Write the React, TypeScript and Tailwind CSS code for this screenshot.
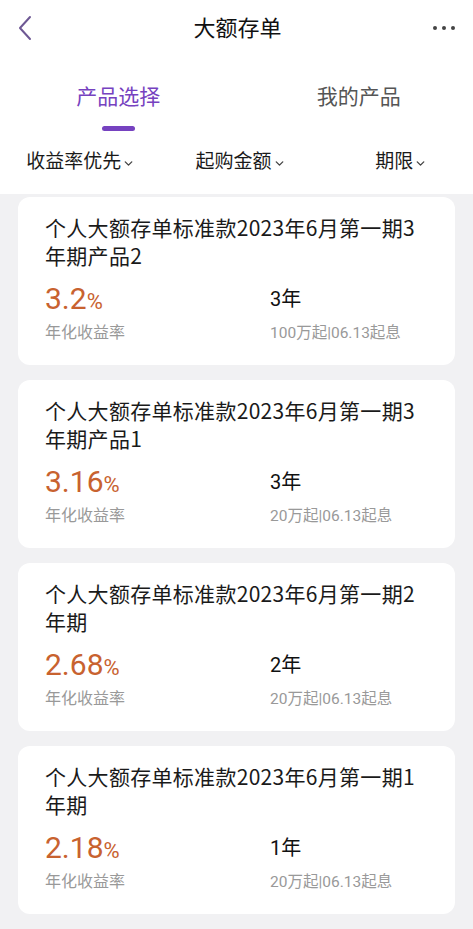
import { ChevronDown } from "lucide-react";

const products = [
  { name: "个人大额存单标准款2023年6月第一期3年期产品2", rate: "3.2", term: "3年", note: "100万起|06.13起息" },
  { name: "个人大额存单标准款2023年6月第一期3年期产品1", rate: "3.16", term: "3年", note: "20万起|06.13起息" },
  { name: "个人大额存单标准款2023年6月第一期2年期", rate: "2.68", term: "2年", note: "20万起|06.13起息" },
  { name: "个人大额存单标准款2023年6月第一期1年期", rate: "2.18", term: "1年", note: "20万起|06.13起息" },
];

function Filter({ label, className }: { label: string; className?: string }) {
  return (
    <div className={"flex items-center justify-center " + (className ?? "")}>
      <span className="text-[19px] leading-[26px] text-[#1a1a1a]">{label}</span>
      <ChevronDown className="w-[13px] h-[13px] text-[#444] mt-[3px] ml-[1px]" strokeWidth={2.5} />
    </div>
  );
}

export default function App() {
  return (
    <div
      className="w-[473px] h-[929px] overflow-hidden bg-[#f1f1f3]"
      style={{ fontFamily: 'Roboto, "Noto Sans CJK SC", sans-serif' }}
    >
      <div className="bg-white">
        <div className="h-[56px] flex items-center justify-between px-[16px]">
          <svg width="18" height="26" viewBox="0 0 18 26" fill="none">
            <path d="M14 2 L4 13 L14 24" stroke="#6e5894" strokeWidth="2" strokeLinecap="round" strokeLinejoin="round" />
          </svg>
          <h1 className="text-[22px] text-[#111] ml-[8px]">大额存单</h1>
          <div className="flex gap-[5px] pr-[2px]">
            <span className="w-[4px] h-[4px] rounded-full bg-[#444]" />
            <span className="w-[4px] h-[4px] rounded-full bg-[#444]" />
            <span className="w-[4px] h-[4px] rounded-full bg-[#444]" />
          </div>
        </div>
        <div className="grid grid-cols-2 pt-[27px]">
          <div className="flex flex-col items-center">
            <span className="text-[21px] leading-[28px] text-[#7642c0]">产品选择</span>
            <span className="mt-[15px] w-[33px] h-[5px] rounded-full bg-[#7642c0]" />
          </div>
          <div className="flex flex-col items-center pl-[8px]">
            <span className="text-[21px] leading-[28px] text-[#555]">我的产品</span>
          </div>
        </div>
        <div className="grid grid-cols-3 pt-[18px] pb-[19px]">
          <Filter label="收益率优先" className="pl-[4px]" />
          <Filter label="起购金额" className="pl-[8px]" />
          <Filter label="期限" className="pl-[14px]" />
        </div>
      </div>
      <div className="flex flex-col gap-[15px] px-[18px] pt-[3px]">
        {products.map((p) => (
          <div key={p.name} className="bg-white rounded-[12px] pt-[16px] pb-[21px] pl-[27px] pr-[28px]">
            <div
              className="text-[21px] leading-[28px] tracking-[0.3px] text-[#1a1a1a]"
              style={{ fontFamily: '"Noto Sans CJK SC", sans-serif' }}
            >
              {p.name}
            </div>
            <div className="grid grid-cols-[225px_1fr] mt-[12px]">
              <div>
                <div className="h-[36px] flex items-baseline text-[#c8622f]">
                  <span className="text-[30px] leading-[36px]">{p.rate}</span>
                  <span className="text-[22px]">%</span>
                </div>
                <div className="mt-[5px] text-[16px] leading-[22px] text-[#999]">年化收益率</div>
              </div>
              <div>
                <div className="h-[36px] flex items-center text-[20px] text-[#111]">{p.term}</div>
                <div className="mt-[5px] text-[15.5px] leading-[22px] text-[#999]">{p.note}</div>
              </div>
            </div>
          </div>
        ))}
      </div>
    </div>
  );
}
